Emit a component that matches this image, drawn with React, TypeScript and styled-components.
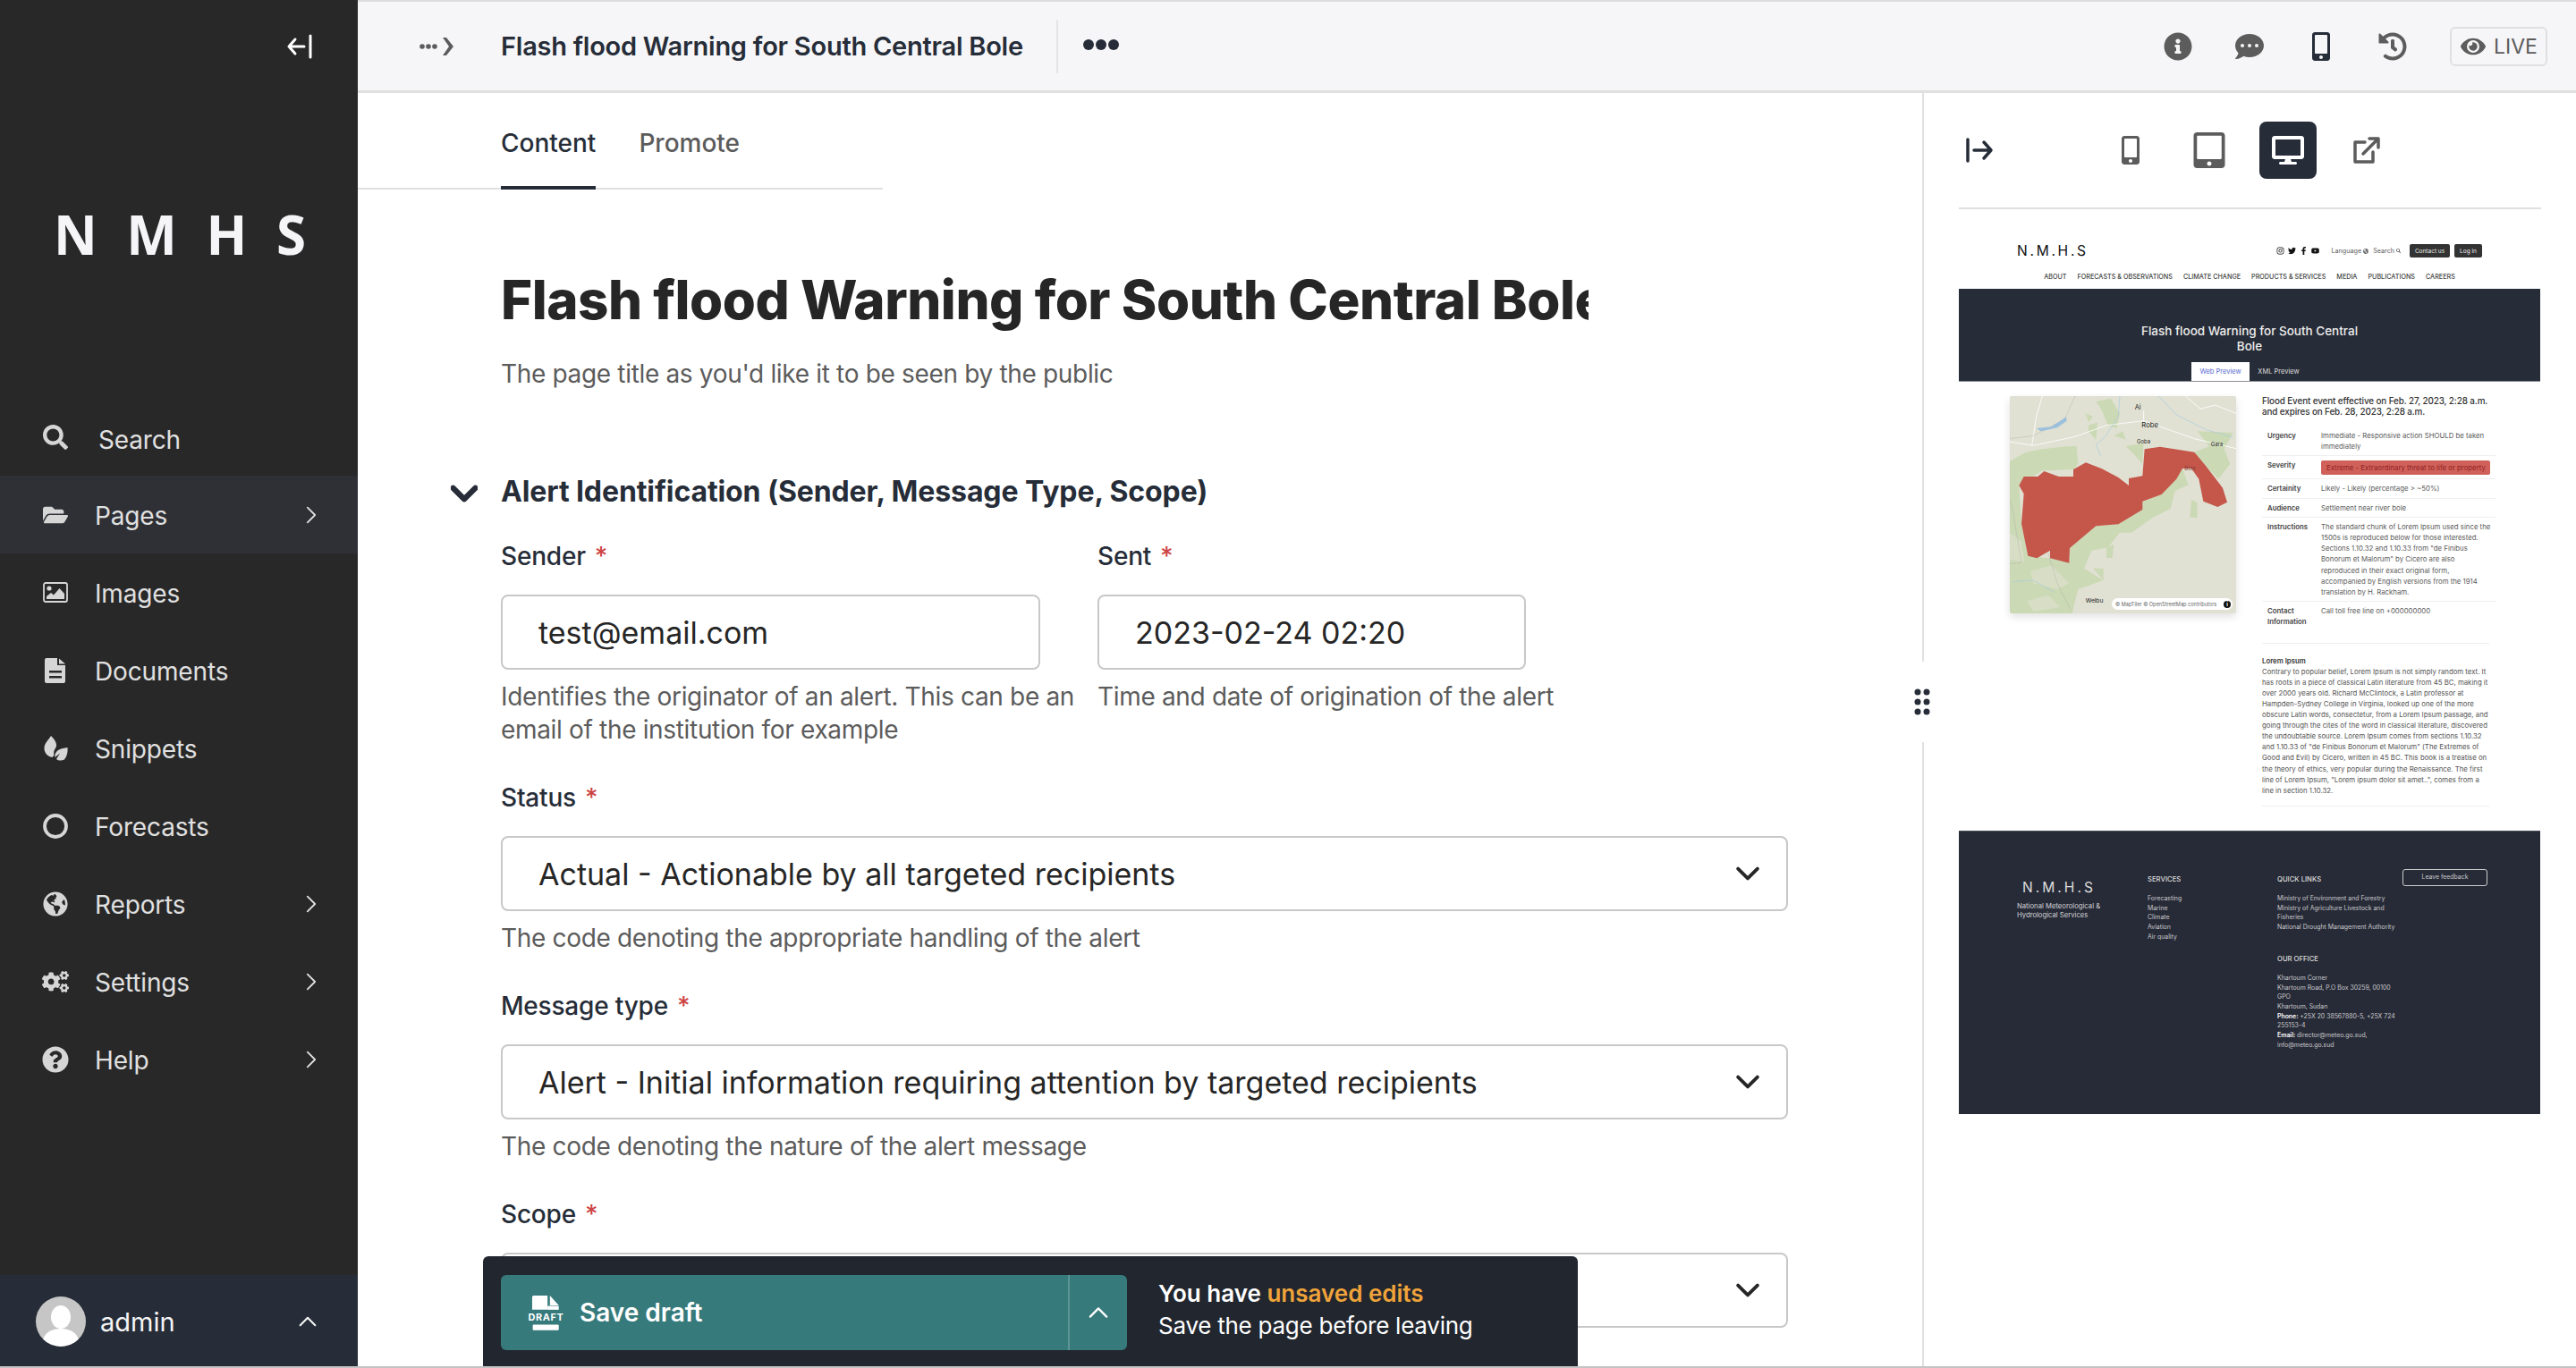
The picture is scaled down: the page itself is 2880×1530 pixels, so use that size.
import React from "react";
import styled, { createGlobalStyle } from "styled-components";
import {
  FaSearch, FaFolderOpen, FaGlobeAmericas, FaCogs, FaQuestionCircle,
  FaInfoCircle, FaCommentDots, FaMobileAlt, FaHistory, FaEye, FaTabletAlt, FaDesktop,
  FaTwitter, FaFacebookF, FaYoutube, FaInstagram,
} from "react-icons/fa";

const Global = createGlobalStyle`
  html, body { margin: 0; padding: 0; background: #fff; }
  body { font-family: Inter, "Liberation Sans", sans-serif; color: #262626; overflow: hidden; }
  * { box-sizing: border-box; }
`;

const Shell = styled.div`
  display: flex;
  width: 2880px;
  height: 1530px;
  overflow: hidden;
  position: relative;
  border-bottom: 2px solid #c4c4c4;
`;

/* ---------- sidebar ---------- */
const Sidebar = styled.aside`
  width: 400px;
  flex: none;
  background: #282828;
  color: #e0e0e0;
  display: flex;
  flex-direction: column;
  height: 1530px;
  border-bottom-left-radius: 14px;
`;
const SideTop = styled.div`
  height: 104px;
  display: flex;
  justify-content: flex-end;
  align-items: center;
  padding-right: 50px;
  color: #fff;
`;
const Logo = styled.div`
  height: 316px;
  padding: 120px 0 0 60px;
  font-family: "Open Sans", sans-serif;
  font-weight: 700;
  font-size: 60px;
  line-height: 76px;
  color: #f5f5f8;
`;
const LogoGlyphs = styled.div`
  display: flex;
  width: 282px;
  justify-content: space-between;
`;
const Nav = styled.nav`
  margin-top: 25px;
  display: flex;
  flex-direction: column;
`;
const NavItem = styled.div<{ $active?: boolean }>`
  height: 87px;
  display: flex;
  align-items: center;
  padding-left: 47px;
  padding-right: 42px;
  font-size: 28px;
  letter-spacing: -0.15px;
  background: ${(p) => (p.$active ? "#2e3036" : "transparent")};
  color: #e0e0e0;
`;
const NavIcon = styled.span`
  width: 30px;
  display: flex;
  justify-content: center;
  margin-right: 29px;
  flex: none;
  color: #d6d6d6;
`;
const NavLabel = styled.span<{ $shift?: number }>`
  flex: 1;
  padding-left: ${(p) => p.$shift || 0}px;
  padding-top: ${(p) => (p.$shift ? 6 : 2)}px;
`;
const Account = styled.div`
  margin-top: auto;
  height: 104px;
  background: #262d38;
  display: flex;
  align-items: center;
  padding: 0 46px 0 40px;
  font-size: 29px;
  color: #f5f5f5;
`;
const AccountName = styled.span`
  margin-left: 16px;
  flex: 1;
`;

/* ---------- right area ---------- */
const Right = styled.div`
  flex: 1;
  display: flex;
  flex-direction: column;
  min-width: 0;
`;
const Header = styled.header`
  height: 104px;
  flex: none;
  background: #f6f6f8;
  border-top: 2px solid #dcdcdf;
  border-bottom: 3px solid #e0e0e0;
  display: flex;
  align-items: center;
`;
const Crumb = styled.div`
  width: 160px;
  padding-left: 69px;
  color: #5c5c5c;
  display: flex;
  align-items: center;
`;
const HeaderTitle = styled.h2`
  margin: 0;
  font-size: 29px;
  letter-spacing: -0.25px;
  font-weight: 600;
  color: #262d38;
  width: 621px;
  white-space: nowrap;
`;
const HeaderRule = styled.div`
  width: 2px;
  height: 60px;
  background: #e4e4e6;
`;
const MoreDots = styled.div`
  margin-left: 28px;
  display: flex;
  gap: 2px;
  margin-bottom: 4px;
`;
const Dot = styled.span`
  width: 12px;
  height: 12px;
  border-radius: 50%;
  background: #262d38;
`;
const HeaderTools = styled.div`
  margin-left: auto;
  display: flex;
  align-items: center;
  padding-right: 32px;
`;
const HeaderTool = styled.span<{ $dark?: boolean }>`
  width: 80px;
  display: flex;
  justify-content: center;
  color: ${(p) => (p.$dark ? "#262d38" : "#5c5c5c")};
`;
const LiveBox = styled.div`
  margin-left: 24px;
  width: 109px;
  height: 44px;
  border: 2px solid #e0e0e0;
  border-radius: 6px;
  display: flex;
  align-items: center;
  gap: 9px;
  padding-left: 10px;
  font-size: 23px;
  color: #5c5c5c;
`;

const Body = styled.div`
  flex: 1;
  display: flex;
  min-height: 0;
  position: relative;
`;
const FormPane = styled.main`
  width: 1749px;
  flex: none;
  overflow: hidden;
`;
const Tabs = styled.div`
  width: 587px;
  height: 108px;
  padding-left: 160px;
  border-bottom: 2px solid #e0e0e0;
  display: flex;
  gap: 48px;
`;
const Tab = styled.div<{ $active?: boolean }>`
  height: 108px;
  padding-top: 38px;
  font-size: 28px;
  line-height: 36px;
  font-weight: 500;
  color: ${(p) => (p.$active ? "#262d38" : "#5c5c5c")};
  border-bottom: 4px solid ${(p) => (p.$active ? "#262d38" : "transparent")};
`;
const FormBody = styled.div`
  padding-left: 160px;
`;
const TitleInput = styled.h1`
  margin: 87px 0 0;
  width: 1216px;
  overflow: hidden;
  white-space: nowrap;
  font-size: 60px;
  line-height: 72px;
  font-weight: 800;
  letter-spacing: -0.45px;
  color: #262626;
`;
const TitleHelp = styled.p`
  margin: 27px 0 0;
  font-size: 28px;
  letter-spacing: -0.33px;
  line-height: 40px;
  color: #5c5c5c;
`;
const Section = styled.div`
  margin-top: 87px;
  height: 48px;
  display: flex;
  align-items: center;
  position: relative;
  font-size: 32px;
  letter-spacing: -0.1px;
  font-weight: 700;
  color: #262d38;
`;
const SectionChevron = styled.span`
  position: absolute;
  left: -56px;
  top: 12px;
  color: #262d38;
  display: flex;
`;
const Row = styled.div`
  margin-top: 29px;
  display: grid;
  grid-template-columns: 667px 772px;
`;
const Field = styled.div<{ $wide?: boolean }>`
  width: ${(p) => (p.$wide ? "1439px" : "auto")};
  margin-top: ${(p) => (p.$wide ? "37px" : "0")};
`;
const Label = styled.label`
  display: block;
  font-size: 28px;
  letter-spacing: -0.2px;
  line-height: 40px;
  font-weight: 500;
  color: #262d38;
  margin-bottom: 23px;
`;
const Required = styled.span`
  color: #cd4444;
  margin-left: 10px;
`;
const Control = styled.div<{ $width?: number }>`
  width: ${(p) => (p.$width ? `${p.$width}px` : "100%")};
  height: 84px;
  border: 2px solid #c8c8c8;
  border-radius: 8px;
  display: flex;
  align-items: center;
  justify-content: space-between;
  padding: 0 30px 0 40px;
  font-size: 34px;
  color: #262626;
  background: #fff;
`;
const Help = styled.p`
  margin: 12px 0 0;
  font-size: 28px;
  letter-spacing: -0.33px;
  line-height: 37px;
  color: #5c5c5c;
  white-space: pre-line;
`;

/* ---------- preview panel ---------- */
const PreviewPane = styled.section`
  flex: 1;
  border-left: 2px solid #e0e0e0;
  padding: 0 39px;
  overflow: hidden;
`;
const Grip = styled.div`
  position: absolute;
  left: 1733px;
  top: 636px;
  width: 32px;
  height: 90px;
  background: #fff;
  display: flex;
  align-items: center;
  justify-content: center;
`;
const PreviewBar = styled.div`
  height: 130px;
  border-bottom: 2px solid #e0e0e0;
  display: flex;
  align-items: center;
  margin-bottom: 2px;
`;
const Side = styled.span`
  margin-left: 7px;
  color: #262d38;
  display: flex;
`;
const SizeButtons = styled.div`
  display: flex;
  align-items: center;
  gap: 12px;
  margin-left: 121px;
`;
const SizeButton = styled.span<{ $active?: boolean; $w: number }>`
  width: ${(p) => p.$w}px;
  height: 64px;
  display: flex;
  align-items: center;
  justify-content: center;
  border-radius: 8px;
  color: ${(p) => (p.$active ? "#fff" : "#5c5c5c")};
  background: ${(p) => (p.$active ? "#262d38" : "transparent")};
`;

const Frame = styled.div`
  width: 650px;
  font-family: Inter, sans-serif;
  color: #262626;
`;
const PvTop = styled.div`
  display: flex;
  align-items: center;
  height: 15px;
  margin-top: 39px;
  padding: 0 65px;
`;
const PvLogo = styled.div`
  font-size: 15.6px;
  letter-spacing: 2.7px;
  color: #111;
  flex: 1;
`;
const PvSocial = styled.div`
  display: flex;
  gap: 4px;
  align-items: center;
  color: #111;
  margin-right: 14px;
`;
const PvSmall = styled.span`
  font-size: 7.2px;
  color: #5c5c5c;
  margin-right: 5px;
  display: flex;
  align-items: center;
  gap: 2px;
`;
const PvBtn = styled.span<{ $w: number }>`
  width: ${(p) => p.$w}px;
  height: 15px;
  margin-left: 5px;
  border-radius: 2px;
  background: #333;
  color: #eee;
  font-size: 6.5px;
  display: flex;
  align-items: center;
  justify-content: center;
  &:first-of-type { margin-left: -2px; }
`;
const PvNav = styled.div`
  height: 35px;
  padding-top: 7px;
  display: flex;
  justify-content: center;
  gap: 12px;
  align-items: center;
  font-size: 7.2px;
  font-weight: 500;
  color: #444;
`;
const PvBanner = styled.div`
  height: 104px;
  background: #272d38;
  border-bottom: 1px solid #8b8f96;
  padding-top: 39px;
  display: flex;
  flex-direction: column;
  align-items: center;
  color: #eee;
`;
const PvTitle = styled.div`
  width: 260px;
  text-align: center;
  font-size: 13.5px;
  line-height: 17px;
  font-weight: 500;
`;
const PvTabs = styled.div`
  margin-top: 9px;
  display: flex;
  font-size: 7.5px;
`;
const PvTab = styled.span<{ $active?: boolean }>`
  width: 65px;
  height: 21px;
  display: flex;
  align-items: center;
  justify-content: center;
  background: ${(p) => (p.$active ? "#fff" : "transparent")};
  color: ${(p) => (p.$active ? "#5a6bd0" : "#ddd")};
`;
const PvMain = styled.div`
  display: flex;
  padding: 15px 0 0 57px;
  height: 502px;
`;
const MapBox = styled.div`
  width: 253px;
  height: 243px;
  position: relative;
  margin-top: 1px;
  border-radius: 3px;
  overflow: hidden;
  background: #e0e1d3;
  box-shadow: 0 4px 10px rgba(0, 0, 0, 0.12);
  flex: none;
`;
const MapPill = styled.div`
  position: absolute;
  left: 114px;
  right: 4px;
  bottom: 4px;
  height: 13px;
  border-radius: 7px;
  background: #fff;
  display: flex;
  align-items: center;
  justify-content: space-between;
  padding: 0 2px 0 4px;
  font-size: 5.6px;
  color: #666;
  white-space: nowrap;
`;
const MapI = styled.span`
  width: 8px;
  height: 8px;
  border-radius: 50%;
  background: #111;
  flex: none;
  color: #fff;
  font-size: 6px;
  line-height: 8px;
  text-align: center;
  font-weight: 700;
`;
const PvInfo = styled.div`
  margin-left: 29px;
  width: 254px;
`;
const PvHeading = styled.div`
  font-size: 9.9px;
  letter-spacing: -0.12px;
  line-height: 12px;
  font-weight: 500;
  color: #333;
`;
const PvTable = styled.div`
  width: 261px;
  margin-top: 11px;
`;
const PvRow = styled.div<{ $last?: boolean }>`
  display: grid;
  grid-template-columns: 60px 1fr;
  padding: 4px 2px 4px 6px;
  min-height: 21px;
  font-size: 7.8px;
  line-height: 12.2px;
  color: #5c5c5c;
  border-bottom: ${(p) => (p.$last ? "none" : "1px solid #efefef")};
`;
const PvKey = styled.span`
  font-weight: 600;
  color: #444;
`;
const PvSevere = styled.span`
  background: #d0605a;
  color: #8f2222;
  border-radius: 2px;
  height: 16px;
  width: 189px;
  margin-top: 1px;
  padding: 0 6px;
  line-height: 16px;
  white-space: nowrap;
`;
const PvRule = styled.div`
  height: 1px;
  margin-top: 13px;
  background: #efefef;
`;
const PvLorem = styled.div`
  margin-top: 13px;
  padding-bottom: 11px;
  font-size: 7.8px;
  line-height: 12.1px;
  color: #555;
  border-bottom: 1px solid #efefef;
  & > b { display: block; color: #333; font-weight: 600; font-size: 7.8px; }
`;
const PvFooter = styled.footer`
  height: 317px;
  background: #272b37;
  border-top: 1px solid #4a4e59;
  padding: 42px 0 0 65px;
  display: grid;
  grid-template-columns: 146px 145px 140px 95px;
  color: #c8c8cc;
  font-size: 6.9px;
  line-height: 10.7px;
`;
const PvBrand = styled.div`
  padding-top: 11px;
  & > div:first-child {
    font-size: 15.6px;
    letter-spacing: 3px;
    line-height: 20px;
    padding-left: 6px;
    color: #ddd;
  }
  & > div:last-child {
    margin-top: 6px;
    font-size: 7.7px;
    line-height: 9.5px;
    color: #d4d4d8;
  }
`;
const PvCol = styled.div`
  padding-top: 6px;
  & > h5 {
    margin: 0 0 11px;
    font-size: 7.7px;
    line-height: 11px;
    font-weight: 500;
    color: #ddd;
  }
  & > p { margin: 0; width: 136px; }
  & > h5:nth-of-type(2) { margin-top: 24px; margin-bottom: 11px; }
  & b { color: #fff; font-weight: 600; }
`;
const PvFeedback = styled.div`
  width: 95px;
  height: 19px;
  border: 1px solid #ccc;
  border-radius: 3px;
  display: flex;
  align-items: center;
  justify-content: center;
`;

/* ---------- action bar ---------- */
const ActionBar = styled.div`
  position: absolute;
  left: 540px;
  bottom: 0;
  width: 1224px;
  height: 123px;
  background: #22272f;
  border-radius: 6px 6px 0 0;
  display: flex;
  padding: 21px 0 0 20px;
`;
const SaveButton = styled.div`
  width: 700px;
  height: 84px;
  background: #377a7c;
  border-radius: 6px;
  display: flex;
  align-items: center;
  color: #fff;
  font-size: 28px;
  font-weight: 600;
`;
const SaveMain = styled.div`
  width: 636px;
  height: 84px;
  display: flex;
  align-items: center;
  gap: 16px;
  padding-left: 29px;
  border-right: 2px solid #5d9596;
`;
const SaveMore = styled.div`
  flex: 1;
  display: flex;
  justify-content: center;
`;
const Unsaved = styled.div`
  margin-left: 35px;
  color: #fff;
  font-size: 26px;
  line-height: 36px;
  padding-top: 3px;
`;
const UnsavedHead = styled.div`
  font-weight: 600;
  & > em { font-style: normal; color: #f0a33a; }
`;
const UnsavedNote = styled.div`
  letter-spacing: -0.25px;
`;

const ImageIcon = () => (
  <svg width="28" height="23" viewBox="0 0 28 23" fill="currentColor">
    <rect x="1" y="1" width="26" height="21" rx="2" fill="none" stroke="currentColor" strokeWidth="1.800" />
    <circle cx="7" cy="7" r="2.600" />
    <path d="M4 19v-3l5-4 3 2.500L18.500 7 24 13v6z" />
  </svg>
);
const DocIcon = () => (
  <svg width="24" height="28" viewBox="0 0 24 28" fill="currentColor">
    <path d="M2 0h12v8h9v18a2 2 0 0 1-2 2H2a2 2 0 0 1-2-2V2a2 2 0 0 1 2-2zM5 14v2.500h14V14zm0 6v2.500h14V20z" fillRule="evenodd" />
    <path d="M16 .5L23 6.500h-7z" />
  </svg>
);
const LeafIcon = () => (
  <svg width="27" height="28" viewBox="0 0 27 28" fill="currentColor">
    <path d="M8 0c3 3 5.500 6 6 9.500.3 2.500-1 4.500-2 6-1 2-1 4-.5 6L9.500 24C4 23 .5 19 .5 14 .5 8 5 5 8 0z" />
    <path d="M26.500 13c.5 5-.5 10-3.500 13.500-3 1.500-6.500 1.500-9-.5l4-6.500-5.500 4.500c-.500-3 .5-6 3.500-8 3.500-2 7-2.500 10.500-3z" />
  </svg>
);
const RingIcon = () => (
  <svg width="28" height="28" viewBox="0 0 28 28" fill="none" stroke="currentColor" strokeWidth="3.800">
    <circle cx="14" cy="14" r="12" />
  </svg>
);

const nav = [
  { label: "Pages", icon: <FaFolderOpen size={28} />, chevron: true, active: true },
  { label: "Images", icon: <ImageIcon /> },
  { label: "Documents", icon: <DocIcon /> },
  { label: "Snippets", icon: <LeafIcon /> },
  { label: "Forecasts", icon: <RingIcon /> },
  { label: "Reports", icon: <FaGlobeAmericas size={28} />, chevron: true },
  { label: "Settings", icon: <FaCogs size={32} />, chevron: true },
  { label: "Help", icon: <FaQuestionCircle size={32} />, chevron: true },
];

const Chevron = ({ dir = "right", size = 22, width = 3, color = "currentColor" }: { dir?: string; size?: number; width?: number; color?: string }) => {
  const d: Record<string, string> = {
    right: "M7 2l10 10L7 22",
    up: "M2 17L12 7l10 10",
    down: "M2 7l10 10L22 7",
  };
  return (
    <svg width={size} height={size} viewBox="0 0 24 24" fill="none" stroke={color} strokeWidth={width} strokeLinecap="round" strokeLinejoin="round">
      <path d={d[dir]} />
    </svg>
  );
};

const plainRows: [string, string][] = [
  ["Certainity", "Likely - Likely (percentage > ~50%)"],
  ["Audience", "Settlement near river bole"],
];

const mapRed =
  "52,312 68,282 115,282 136,264 185,282 234,282 234,258 276,235 330,256 385,285 420,312 420,288 466,280 473,190 525,182 640,200 680,248 735,320 750,368 718,384 670,365 655,290 630,255 600,255 580,290 530,342 466,365 466,393 385,442 310,448 222,522 220,572 156,556 156,530 112,556 82,548 60,440 68,340";

const mapGreens = [
  "21,230 75,200 130,190 215,180 245,180 250,240 235,258 130,262 52,312 60,440 82,548 156,556 220,572 222,522 310,448 385,442 466,393 466,365 530,342 600,255 620,310 575,330 560,390 500,420 430,470 390,470 350,520 295,530 270,590 335,630 250,660 230,741 21,741",
  "310,30 360,20 390,70 380,120 350,110 330,60",
  "285,110 315,100 310,160 285,130",
  "275,70 300,80 285,100",
  "410,180 470,170 465,240 440,210",
  "650,130 770,135 740,190 760,240 720,290 680,248 640,200 690,180",
  "630,360 650,370 650,420 625,420",
  "300,590 335,590 335,630",
  "345,520 370,510 365,555 345,555",
  "370,145 400,130 410,158",
];

const MapSvg = () => (
  <svg width="253" height="243" viewBox="21 12 759 729">
    <rect x="21" y="12" width="759" height="729" fill="#e0e1d3" />
    <g fill="#cbd9b5">
      {mapGreens.map((g) => <polygon key={g} points={g} />)}
    </g>
    <g fill="#d8dec6">
      <polygon points="90,600 160,580 220,640 180,660 100,640" />
      <polygon points="21,470 60,500 70,570 21,560" />
      <polygon points="80,700 150,680 190,720 100,735" />
    </g>
    <g fill="none" stroke="#fff" strokeWidth="2.500">
      <path d="M21 165L100 178 240 148 345 110 470 95 640 155 780 188" />
      <path d="M130 12L110 80 95 178" />
      <path d="M470 60V100" />
      <path d="M610 12L660 55 710 42 780 70" />
    </g>
    <g fill="none" stroke="#b0b0a8" strokeWidth="2" strokeDasharray="5 3">
      <path d="M240 12L205 90 100 145 21 155" />
      <path d="M21 360L30 390 60 570 21 575" />
      <path d="M150 540L180 640 225 730" />
    </g>
    <polygon points="110,120 160,115 210,82 212,95 180,118 125,130" fill="#9cc0dc" />
    <g fill="none" stroke="#a8c8e0" strokeWidth="2">
      <path d="M390 12L385 80 340 150 310 175 325 212" />
      <path d="M520 12L580 75 680 125 770 150" />
      <path d="M30 635L100 630 170 670" />
    </g>
    <polygon points={mapRed} fill="#c4574a" />
    <g fontFamily="Inter, sans-serif" fill="#222">
      <text x="440" y="58" fontSize="22">Ai</text>
      <text x="463" y="117" fontSize="23">Robe</text>
      <text x="447" y="172" fontSize="18">Goba</text>
      <text x="695" y="180" fontSize="18">Gara</text>
      <text x="607" y="260" fontSize="18" fill="#8a3a32">Bole</text>
      <text x="275" y="705" fontSize="20">Welbu</text>
    </g>
  </svg>
);

export default function App() {
  return (
    <Shell>
      <Global />
      <Sidebar>
        <SideTop>
          <svg width="30" height="30" viewBox="0 0 30 30" fill="none" stroke="currentColor" strokeWidth="3" strokeLinecap="round" strokeLinejoin="round">
            <path d="M27 3v24M20 15H3M10 7l-7 8 7 8" />
          </svg>
        </SideTop>
        <Logo>
          <LogoGlyphs>
            <span>N</span><span>M</span><span>H</span><span>S</span>
          </LogoGlyphs>
        </Logo>
        <Nav>
          <NavItem>
            <NavIcon><FaSearch size={28} /></NavIcon>
            <NavLabel $shift={4}>Search</NavLabel>
          </NavItem>
          {nav.map((n) => (
            <NavItem key={n.label} $active={n.active}>
              <NavIcon>{n.icon}</NavIcon>
              <NavLabel>{n.label}</NavLabel>
              {n.chevron && <Chevron size={20} width={2.200} />}
            </NavItem>
          ))}
        </Nav>
        <Account>
          <svg width="56" height="56" viewBox="0 0 56 56">
            <defs>
              <clipPath id="avatar"><circle cx="28" cy="28" r="28" /></clipPath>
            </defs>
            <g clipPath="url(#avatar)">
              <rect width="56" height="56" fill="#c6c6c6" />
              <ellipse cx="28" cy="23" rx="11" ry="13" fill="#fff" />
              <ellipse cx="28" cy="50" rx="20" ry="14" fill="#fff" />
            </g>
          </svg>
          <AccountName>admin</AccountName>
          <Chevron dir="up" size={20} width={2.500} />
        </Account>
      </Sidebar>

      <Right>
        <Header>
          <Crumb>
            <svg width="40" height="22" viewBox="0 0 40 22" fill="currentColor">
              <circle cx="3" cy="11" r="2.800" /><circle cx="10" cy="11" r="2.800" /><circle cx="17" cy="11" r="2.800" />
              <path d="M26 1h4l8 10-8 10h-4l7-10z" />
            </svg>
          </Crumb>
          <HeaderTitle>Flash flood Warning for South Central Bole</HeaderTitle>
          <HeaderRule />
          <MoreDots><Dot /><Dot /><Dot /></MoreDots>
          <HeaderTools>
            <HeaderTool><FaInfoCircle size={32} /></HeaderTool>
            <HeaderTool><FaCommentDots size={32} /></HeaderTool>
            <HeaderTool $dark><FaMobileAlt size={32} /></HeaderTool>
            <HeaderTool><FaHistory size={32} /></HeaderTool>
            <LiveBox><FaEye size={28} />LIVE</LiveBox>
          </HeaderTools>
        </Header>
        <Body>
          <FormPane>
            <Tabs>
              <Tab $active>Content</Tab>
              <Tab>Promote</Tab>
            </Tabs>
            <FormBody>
              <TitleInput>Flash flood Warning for South Central Bole</TitleInput>
              <TitleHelp>The page title as you'd like it to be seen by the public</TitleHelp>
              <Section>
                <SectionChevron><Chevron dir="down" size={30} width={5} /></SectionChevron>
                Alert Identification (Sender, Message Type, Scope)
              </Section>
              <Row>
                <Field>
                  <Label>Sender<Required>*</Required></Label>
                  <Control $width={603}>test@email.com</Control>
                  <Help>{"Identifies the originator of an alert. This can be an\nemail of the institution for example"}</Help>
                </Field>
                <Field>
                  <Label>Sent<Required>*</Required></Label>
                  <Control $width={479}>2023-02-24 02:20</Control>
                  <Help>Time and date of origination of the alert</Help>
                </Field>
              </Row>
              <Field $wide>
                <Label>Status<Required>*</Required></Label>
                <Control>Actual - Actionable by all targeted recipients<Chevron dir="down" size={26} width={3.500} color="#262626" /></Control>
                <Help>The code denoting the appropriate handling of the alert</Help>
              </Field>
              <Field $wide>
                <Label>Message type<Required>*</Required></Label>
                <Control>Alert - Initial information requiring attention by targeted recipients<Chevron dir="down" size={26} width={3.500} color="#262626" /></Control>
                <Help>The code denoting the nature of the alert message</Help>
              </Field>
              <Field $wide>
                <Label>Scope<Required>*</Required></Label>
                <Control>&nbsp;<Chevron dir="down" size={26} width={3.500} color="#262626" /></Control>
              </Field>
            </FormBody>
          </FormPane>

          <PreviewPane>
            <PreviewBar>
              <Side>
                <svg width="32" height="30" viewBox="0 0 32 30" fill="none" stroke="currentColor" strokeWidth="3.500" strokeLinecap="round" strokeLinejoin="round">
                  <path d="M3 3v24M10 15h19M21 6l8 9-8 9" />
                </svg>
              </Side>
              <SizeButtons>
                <SizeButton $w={64}><FaMobileAlt size={32} /></SizeButton>
                <SizeButton $w={88}><FaTabletAlt size={40} /></SizeButton>
                <SizeButton $w={64} $active><FaDesktop size={36} /></SizeButton>
                <SizeButton $w={88}>
                  <svg width="30" height="30" viewBox="0 0 30 30" fill="none" stroke="currentColor" strokeWidth="3.500" strokeLinejoin="round" strokeLinecap="round">
                    <path d="M13 6H2v22h20V17" />
                    <path d="M11 19L27 3M18 2h10v10" />
                  </svg>
                </SizeButton>
              </SizeButtons>
            </PreviewBar>
            <Frame>
              <PvTop>
                <PvLogo>N.M.H.S</PvLogo>
                <PvSocial>
                  <FaInstagram size={9} /><FaTwitter size={9} /><FaFacebookF size={9} /><FaYoutube size={9} />
                </PvSocial>
                <PvSmall>Language <FaGlobeAmericas size={6} /></PvSmall>
                <PvSmall>Search <FaSearch size={5} /></PvSmall>
                <PvBtn $w={45}>Contact us</PvBtn>
                <PvBtn $w={31}>Log in</PvBtn>
              </PvTop>
              <PvNav>
                <span>ABOUT</span>
                <span>FORECASTS &amp; OBSERVATIONS</span>
                <span>CLIMATE CHANGE</span>
                <span>PRODUCTS &amp; SERVICES</span>
                <span>MEDIA</span>
                <span>PUBLICATIONS</span>
                <span>CAREERS</span>
              </PvNav>
              <PvBanner>
                <PvTitle>Flash flood Warning for South Central Bole</PvTitle>
                <PvTabs>
                  <PvTab $active>Web Preview</PvTab>
                  <PvTab>XML Preview</PvTab>
                </PvTabs>
              </PvBanner>
              <PvMain>
                <MapBox>
                  <MapSvg />
                  <MapPill>© MapTiler © OpenStreetMap contributors<MapI>i</MapI></MapPill>
                </MapBox>
                <PvInfo>
                  <PvHeading>Flood Event event effective on Feb. 27, 2023, 2:28 a.m. and expires on Feb. 28, 2023, 2:28 a.m.</PvHeading>
                  <PvTable>
                    <PvRow><PvKey>Urgency</PvKey><span>Immediate - Responsive action SHOULD be taken immediately</span></PvRow>
                    <PvRow><PvKey>Severity</PvKey><PvSevere>Extreme - Extraordinary threat to life or property</PvSevere></PvRow>
                    {plainRows.map(([k, v]) => (
                      <PvRow key={k}><PvKey>{k}</PvKey><span>{v}</span></PvRow>
                    ))}
                    <PvRow>
                      <PvKey>Instructions</PvKey>
                      <span>The standard chunk of Lorem Ipsum used since the 1500s is reproduced below for those interested. Sections 1.10.32 and 1.10.33 from "de Finibus Bonorum et Malorum" by Cicero are also reproduced in their exact original form, accompanied by English versions from the 1914 translation by H. Rackham.</span>
                    </PvRow>
                    <PvRow $last><PvKey>Contact Information</PvKey><span>Call toll free line on +000000000</span></PvRow>
                  </PvTable>
                  <PvRule />
                  <PvLorem>
                    <b>Lorem Ipsum</b>
                    Contrary to popular belief, Lorem Ipsum is not simply random text. It has roots in a piece of classical Latin literature from 45 BC, making it over 2000 years old. Richard McClintock, a Latin professor at Hampden-Sydney College in Virginia, looked up one of the more obscure Latin words, consectetur, from a Lorem Ipsum passage, and going through the cites of the word in classical literature, discovered the undoubtable source. Lorem Ipsum comes from sections 1.10.32 and 1.10.33 of "de Finibus Bonorum et Malorum" (The Extremes of Good and Evil) by Cicero, written in 45 BC. This book is a treatise on the theory of ethics, very popular during the Renaissance. The first line of Lorem Ipsum, "Lorem ipsum dolor sit amet..", comes from a line in section 1.10.32.
                  </PvLorem>
                </PvInfo>
              </PvMain>
              <PvFooter>
                <PvBrand>
                  <div>N.M.H.S</div>
                  <div>National Meteorological &amp;<br />Hydrological Services</div>
                </PvBrand>
                <PvCol>
                  <h5>SERVICES</h5>
                  <p>Forecasting<br />Marine<br />Climate<br />Aviation<br />Air quality</p>
                </PvCol>
                <PvCol>
                  <h5>QUICK LINKS</h5>
                  <p>Ministry of Environment and Forestry<br />Ministry of Agriculture Livestock and Fisheries<br />National Drought Management Authority</p>
                  <h5>OUR OFFICE</h5>
                  <p>Khartoum Corner<br />Khartoum Road, P.O Box 30259, 00100 GPO<br />Khartoum, Sudan<br /><b>Phone:</b> +25X 20 38567880-5, +25X 724 255153-4<br /><b>Email:</b> director@meteo.go.sud, info@meteo.go.sud</p>
                </PvCol>
                <PvFeedback>Leave feedback</PvFeedback>
              </PvFooter>
            </Frame>
          </PreviewPane>
          <Grip>
            <svg width="18" height="30" viewBox="0 0 18 30" fill="#262d38">
              <circle cx="4" cy="4" r="3.500" /><circle cx="14" cy="4" r="3.500" />
              <circle cx="4" cy="15" r="3.500" /><circle cx="14" cy="15" r="3.500" />
              <circle cx="4" cy="26" r="3.500" /><circle cx="14" cy="26" r="3.500" />
            </svg>
          </Grip>
        </Body>
        <ActionBar>
          <SaveButton>
            <SaveMain>
              <svg width="43" height="39" viewBox="57 55 130 118">
                <path d="M75 60a5 5 0 0 1 5-5h47v48H75z" fill="#fff" />
                <path d="M135 55l30 33h-30z" fill="#fff" />
                <path d="M127 90h38v13h-38z" fill="#fff" />
                <text x="122" y="140" textAnchor="middle" fontFamily="Inter, sans-serif" fontSize="33" fontWeight="700" letterSpacing="2" fill="#fff">DRAFT</text>
                <rect x="77" y="153" width="88" height="19" rx="3" fill="#fff" />
              </svg>
              Save draft
            </SaveMain>
            <SaveMore><Chevron dir="up" size={22} width={2.500} /></SaveMore>
          </SaveButton>
          <Unsaved>
            <UnsavedHead>You have <em>unsaved edits</em></UnsavedHead>
            <UnsavedNote>Save the page before leaving</UnsavedNote>
          </Unsaved>
        </ActionBar>
      </Right>
    </Shell>
  );
}
